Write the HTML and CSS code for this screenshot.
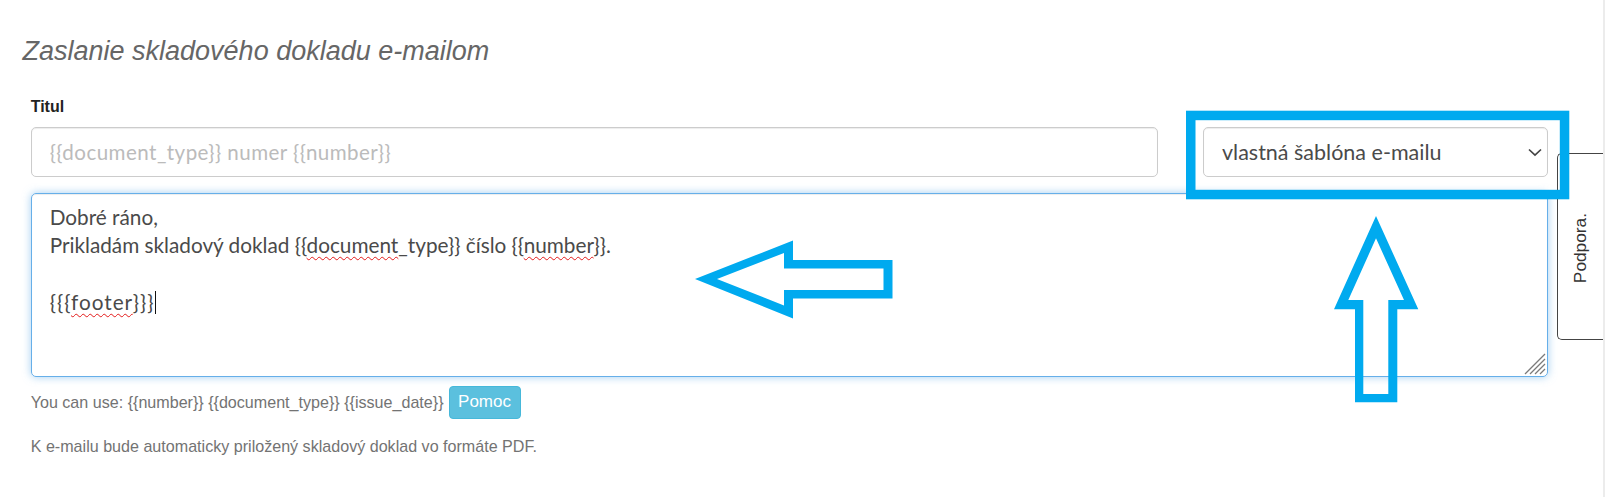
FILE: index.html
```html
<!DOCTYPE html>
<html lang="sk">
<head>
<meta charset="utf-8">
<title>Zaslanie skladového dokladu e-mailom</title>
<link rel="stylesheet" href="styles.css">
</head>
<body>
<div class="page">
  <h3 class="title">Zaslanie skladového dokladu e-mailom</h3>
  <label class="label" for="subject">Titul</label>
  <div class="row">
    <input id="subject" class="field" type="text" placeholder="{{document_type}} numer {{number}}">
    <div class="select">
      <span class="select-text">vlastná šablóna e-mailu</span>
      <svg class="chevron" width="14" height="9" viewBox="0 0 14 9"><path d="M1 1.5 L7 7.2 L13 1.5" fill="none" stroke="#444" stroke-width="1.7"/></svg>
    </div>
  </div>
  <div class="textarea">
    <div class="line">Dobré ráno,</div>
    <div class="line">Prikladám skladový doklad {{<span class="sp">document</span>_type}} číslo {{<span class="sp">number</span>}}.</div>
    <div class="line">&nbsp;</div>
    <div class="line line-wide">{{{<span class="sp">footer</span>}}}<span class="caret"></span></div>
    <svg class="grip" width="22" height="22" viewBox="0 0 22 22"><g stroke="#7a7a7a" stroke-width="1.3"><line x1="1" y1="21" x2="21" y2="1"/><line x1="6" y1="21" x2="21" y2="6"/><line x1="11" y1="21" x2="21" y2="11"/><line x1="16" y1="21" x2="21" y2="16"/></g></svg>
  </div>
  <div class="help">
    <span>You can use: {{number}} {{document_type}} {{issue_date}}</span>
    <button class="btn" type="button">Pomoc</button>
  </div>
  <p class="note">K e-mailu bude automaticky priložený skladový doklad vo formáte PDF.</p>
</div>
<aside class="support-tab"><span class="support-text">Podpora.</span></aside>
<svg class="annot" width="1605" height="497" viewBox="0 0 1605 497">
  <rect x="1190.75" y="115.45" width="373.8" height="79.1" fill="none" stroke="#00aaef" stroke-width="9.5"/>
  <path fill="#00aaef" fill-rule="evenodd" d="M695 279 L793 240.5 L793 260 L892.5 260 L892.5 298.5 L793 298.5 L793 318.5 Z M717 279 L784 253 L784 268.5 L883.5 268.5 L883.5 290 L784 290 L784 305.5 Z"/>
  <path fill="#00aaef" fill-rule="evenodd" d="M1376 216 L1418.3 309.3 L1397.3 309.3 L1397.3 402.3 L1355 402.3 L1355 309.3 L1334 309.3 Z M1376 238.3 L1348.3 300 L1363.3 300 L1363.3 394 L1388.3 394 L1388.3 300 L1404 300 Z"/>
</svg>
</body>
</html>
```
FILE: styles.css
```css
html, body {
  margin: 0;
  padding: 0;
  background: #fff;
}
body {
  position: relative;
  width: 1605px;
  height: 497px;
  overflow: hidden;
  box-sizing: border-box;
  border-right: 2px solid #ececec;
  font-family: "Liberation Sans", Arial, sans-serif;
  color: #333;
}
.page {
  padding: 36px 55px 0 30.7px;
}
.title {
  margin: 0 0 0 -8.2px;
  font-style: italic;
  font-weight: normal;
  font-size: 27px;
  line-height: 30px;
  color: #666;
}
.label {
  display: block;
  margin-top: 29.7px;
  font-weight: bold;
  font-size: 16px;
  line-height: 22.86px;
  color: #222;
}
.row {
  display: flex;
  gap: 45px;
  margin-top: 8.7px;
  height: 50px;
}
.field, .select {
  box-sizing: border-box;
  height: 50px;
  border: 1px solid #ccc;
  border-radius: 5px;
  box-shadow: inset 0 1px 1px rgba(0,0,0,.075);
  background: #fff;
  font-family: Lato, "Noto Sans", sans-serif;
  font-size: 20.57px;
  color: #4a4a4a;
}
.field {
  flex: 1;
  min-width: 0;
  padding: 0 18px;
  outline: none;
  letter-spacing: 0.45px;
}
.field::placeholder {
  color: #bbb;
}
.select {
  width: 345px;
  display: flex;
  align-items: center;
  justify-content: space-between;
  padding: 0 5px 0 18px;
  font-size: 21.5px;
}
.chevron {
  display: block;
}
.textarea {
  position: relative;
  box-sizing: border-box;
  margin-top: 16px;
  height: 183.4px;
  border: 1px solid #66afe9;
  border-radius: 5px;
  box-shadow: inset 0 1px 1px rgba(0,0,0,.075), 0 0 8px rgba(102,175,233,.6);
  padding: 8.5px 18px 0 18px;
  font-family: Lato, "Noto Sans", sans-serif;
  font-size: 20.75px;
  line-height: 28.4px;
  color: #4a4a4a;
}
.line-wide {
  letter-spacing: 1px;
}
.sp {
  text-decoration: underline wavy #e31a1a;
  text-decoration-thickness: 1px;
  text-underline-offset: 3px;
  text-decoration-skip-ink: none;
}
.caret {
  display: inline-block;
  width: 1px;
  height: 23px;
  background: #111;
  vertical-align: -4px;
  margin-left: 1px;
}
.grip {
  position: absolute;
  right: 1px;
  bottom: 1px;
}
.help {
  display: flex;
  align-items: center;
  height: 33px;
  margin-top: 9.3px;
  font-size: 16.1px;
  line-height: 22.86px;
  color: #737373;
}
.btn {
  box-sizing: border-box;
  margin-left: 5px;
  height: 33px;
  width: 72px;
  padding: 0;
  border: 1px solid #46b8da;
  border-radius: 4px;
  background: #5bc0de;
  color: #fff;
  font-family: "Liberation Sans", Arial, sans-serif;
  font-size: 17px;
}
.note {
  margin: 16.5px 0 0 0;
  font-size: 16.1px;
  line-height: 22.86px;
  color: #737373;
}
.support-tab {
  position: absolute;
  left: 1557px;
  top: 153px;
  width: 46px;
  height: 187px;
  box-sizing: border-box;
  border: 1px solid #444;
  border-right: none;
  border-radius: 5px 0 0 5px;
  background: #fff;
  display: flex;
  align-items: center;
  justify-content: center;
  padding-top: 4px;
}
.support-text {
  writing-mode: vertical-rl;
  transform: rotate(180deg);
  font-size: 17.3px;
  color: #333;
}
.annot {
  position: absolute;
  left: 0;
  top: 0;
  pointer-events: none;
}
```
